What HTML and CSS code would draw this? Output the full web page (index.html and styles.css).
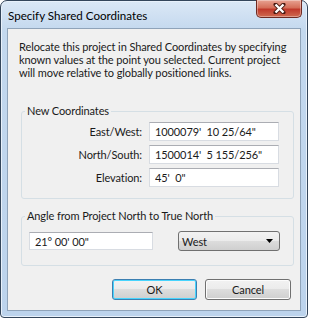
FILE: index.html
```html
<!DOCTYPE html>
<html lang="en">
<head>
  <meta charset="UTF-8">
  <title>Specify Shared Coordinates</title>
  <link rel="stylesheet" href="styles.css">
</head>
<body>

  <div class="window">
    <div class="titlebar">
      <span class="title">Specify Shared Coordinates</span>
      <button class="close">
        <svg width="13" height="11" viewBox="0 0 13 11">
          <path d="M2.5 1.5L10.5 9.5M10.5 1.5L2.5 9.5" stroke="#4a1a12" stroke-width="4" stroke-linecap="round"/>
          <path d="M2.5 1.5L10.5 9.5M10.5 1.5L2.5 9.5" stroke="#fff" stroke-width="2.4"/>
        </svg>
      </button>
    </div>

    <div class="client">
      <p class="intro">Relocate this project in Shared Coordinates by specifying known values at the point you selected. Current project will move relative to globally positioned links.</p>

      <fieldset class="group coords">
        <legend>New Coordinates</legend>
        <div class="row">
          <label for="ew">East/West:</label>
          <input type="text" id="ew" value="1000079'  10 25/64&quot;">
        </div>
        <div class="row">
          <label for="ns">North/South:</label>
          <input type="text" id="ns" value="1500014'  5 155/256&quot;">
        </div>
        <div class="row">
          <label for="elev">Elevation:</label>
          <input type="text" id="elev" value="45'  0&quot;">
        </div>
      </fieldset>

      <fieldset class="group angle">
        <legend>Angle from Project North to True North</legend>
        <div class="angle-row">
          <input type="text" id="angle" value="21° 00' 00&quot;">
          <div class="select">
            <span>West</span>
            <svg width="7" height="4" viewBox="0 0 7 4"><path d="M0 0h7L3.5 4z" fill="#000"/></svg>
          </div>
        </div>
      </fieldset>

      <div class="buttons">
        <button class="btn default">OK</button>
        <button class="btn">Cancel</button>
      </div>
    </div>
  </div>

</body>
</html>
```

FILE: styles.css
```css
body { margin: 0; background: #fff; font-family: Lato, "Liberation Sans", sans-serif; font-size: 11px; letter-spacing: -0.1px; color: #1a1a1a; }
.window { border: 1px solid #34465b; border-radius: 7px 7px 4px 4px; background: linear-gradient(#dbe8f6, #c3d8ee 30px, #bcd3ec); padding: 0 6px 6px 6px; box-sizing: border-box; width: 308px; height: 318px; display: flex; flex-direction: column; box-shadow: inset 0 0 0 1px #e8f1fb; }
.titlebar { height: 27px; display: flex; align-items: flex-start; justify-content: space-between; flex-shrink: 0; }
.title { font-size: 11.6px; letter-spacing: 0; margin-top: 8px; margin-left: 1px; color: #000; }
.close { width: 46px; height: 18px; margin-top: -1px; margin-right: -1px; border: 1px solid #6e2a22; border-top: none; border-radius: 0 0 5px 5px; background: linear-gradient(#e8a393, #d56f5a 45%, #c0392b 55%, #cf6a4f); padding: 0; display: flex; align-items: center; justify-content: center; box-shadow: inset 0 0 0 1px rgba(255,255,255,0.35); }
.client { flex: 1; background: #f0f0f0; border: 1px solid #8fa3b9; padding: 0; }
.intro { margin: 11px 4px 0 11px; line-height: 13px; }
.group { margin: 0 6px 0 13px; border: 1px solid #d5dfe5; border-radius: 3px; padding: 0; min-width: 0; }
.group legend { padding: 0 2px; margin-left: 3px; line-height: 14px; }
.coords { margin-top: 25px; height: 95px; box-sizing: border-box; padding: 4px 0 0 0; }
.row { display: flex; align-items: center; margin-bottom: 4px; }
.row label { width: 120px; text-align: right; }
.row input { margin-left: 7px; width: 130px; height: 19px; box-sizing: border-box; }
input[type=text] { border: 1px solid #d8dce2; border-top-color: #abadb3; background: #fff; font-family: inherit; font-size: 11px; letter-spacing: -0.1px; color: #1a1a1a; padding: 0 5px; outline: none; }
.angle { margin-top: 10px; height: 57px; box-sizing: border-box; padding: 8px 0 0 0; }
.angle-row { display: flex; align-items: center; padding-left: 7px; }
.angle-row input { width: 124px; height: 18px; box-sizing: border-box; }
.select { margin-left: 25px; width: 102px; height: 20px; box-sizing: border-box; border: 1px solid #707070; border-radius: 3px; background: linear-gradient(#f2f2f2, #ebebeb 50%, #dddddd 50%, #cfcfcf); display: flex; align-items: center; justify-content: space-between; padding: 0 6px 0 3px; }
.buttons { display: flex; justify-content: flex-end; gap: 8px; margin: 13px 9px 0 0; }
.btn { width: 86px; height: 21px; border: 1px solid #707070; border-radius: 3px; background: linear-gradient(#f2f2f2, #ebebeb 50%, #dddddd 50%, #cfcfcf); font-family: inherit; font-size: 11px; letter-spacing: -0.1px; color: #1a1a1a; padding: 0; box-shadow: inset 0 0 0 1px #fcfcfc; }
.btn.default { width: 85px; border-color: #3c7fb1; box-shadow: inset 0 0 0 1px #48d4fd; }
```
